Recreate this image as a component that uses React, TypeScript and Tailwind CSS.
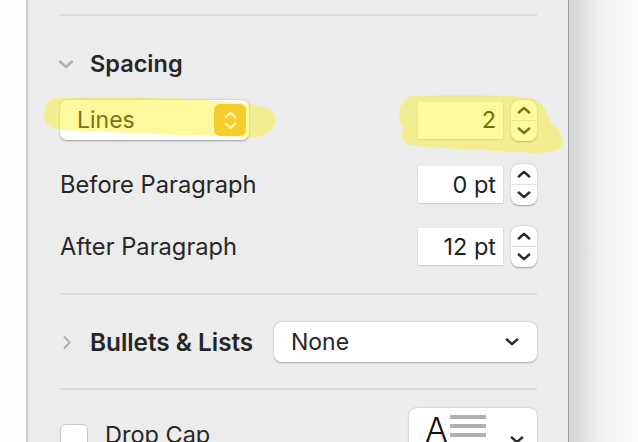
import React from "react"

const font = { fontFamily: "Inter, 'Noto Sans', sans-serif" }

function ChevronUp({ className = "" }: { className?: string }) {
  return (
    <svg viewBox="0 0 14 8" className={className} fill="none" stroke="currentColor" strokeWidth="2.4" strokeLinecap="round" strokeLinejoin="round">
      <path d="M1.8 6.5 L7 1.8 L12.2 6.5" />
    </svg>
  )
}

function ChevronDown({ className = "" }: { className?: string }) {
  return (
    <svg viewBox="0 0 14 8" className={className} fill="none" stroke="currentColor" strokeWidth="2.4" strokeLinecap="round" strokeLinejoin="round">
      <path d="M1.8 1.5 L7 6.2 L12.2 1.5" />
    </svg>
  )
}

function Stepper() {
  return (
    <div className="w-[26px] h-[41px] rounded-[8px] bg-white shadow-[0_0.5px_1.5px_rgba(0,0,0,0.35)] flex flex-col text-[#2a2a2a]">
      <div className="flex-1 flex items-center justify-center border-b border-[#e2e2e2]">
        <ChevronUp className="w-[14px] h-[8px]" />
      </div>
      <div className="flex-1 flex items-center justify-center">
        <ChevronDown className="w-[14px] h-[8px]" />
      </div>
    </div>
  )
}

function NumberField({ value }: { value: string }) {
  return (
    <div className="flex items-center gap-[8px]">
      <div className="w-[85px] h-[37px] bg-white shadow-[0_0.5px_1.5px_rgba(0,0,0,0.3)] flex items-center justify-end pr-[7px] text-[23.5px] text-[#1f1f1f]">
        {value}
      </div>
      <Stepper />
    </div>
  )
}

function Divider() {
  return <div className="h-[2px] bg-[#dadada]" />
}

export default function App() {
  return (
    <div className="relative w-[638px] h-[442px] flex overflow-hidden bg-white" style={font}>
      <div className="w-[26px] bg-[#fdfdfd]" />

      {/* inspector panel */}
      <div className="w-[543px] bg-[#ececec] border-l-2 border-[#cdcdcd] border-r border-r-[#9d9d9d] pl-[32px] pr-[31px] text-[#262626]">
        <div className="pt-[14px]">
          <Divider />
        </div>

        <div className="mt-[28px] h-[40px] flex items-center">
          <ChevronDown className="w-[16px] h-[9px] text-[#b0b0b0] ml-[-2px]" />
          <span className="ml-[16px] text-[23.5px] font-semibold">Spacing</span>
        </div>

        <div className="mt-[16px] h-[40px] flex items-center justify-between">
          <div className="w-[189px] h-[40px] rounded-[7px] bg-white shadow-[0_0.5px_2px_rgba(0,0,0,0.35)] flex items-center justify-between pl-[17px] pr-[3px]">
            <span className="text-[23px]">Lines</span>
            <div className="w-[32px] h-[32px] rounded-[6px] bg-[#f0b94f] flex flex-col items-center justify-center gap-[3px] text-white">
              <ChevronUp className="w-[13px] h-[8px]" />
              <ChevronDown className="w-[13px] h-[8px]" />
            </div>
          </div>
          <NumberField value="2" />
        </div>

        <div className="mt-[24px] h-[41px] flex items-center justify-between">
          <span className="text-[23.7px]">Before Paragraph</span>
          <NumberField value="0 pt" />
        </div>

        <div className="mt-[21px] h-[41px] flex items-center justify-between">
          <span className="text-[23.7px]">After Paragraph</span>
          <NumberField value="12 pt" />
        </div>

        <div className="mt-[26px]">
          <Divider />
        </div>

        <div className="mt-[27px] h-[40px] flex items-center">
          <svg viewBox="0 0 8 14" className="w-[8px] h-[15px] ml-[3px] text-[#b0b0b0]" fill="none" stroke="currentColor" strokeWidth="2" strokeLinecap="round" strokeLinejoin="round">
            <path d="M1.5 1.5 L6.5 7 L1.5 12.5" />
          </svg>
          <span className="ml-[19px] text-[24.3px] font-semibold">Bullets &amp; Lists</span>
          <div className="ml-auto w-[263px] h-[40px] rounded-[8px] bg-white shadow-[0_0.5px_2px_rgba(0,0,0,0.3)] flex items-center justify-between pl-[17px] pr-[18px]">
            <span className="text-[23px]">None</span>
            <ChevronDown className="w-[14px] h-[8px] text-[#2a2a2a]" />
          </div>
        </div>

        <div className="mt-[26px]">
          <Divider />
        </div>

        <div className="mt-[18px] flex items-start">
          <div className="mt-[16px] w-[28px] h-[28px] rounded-[6px] bg-white border border-[#c9c9c9]" />
          <span className="ml-[17px] mt-[12px] text-[23.5px] leading-[30px]">Drop Cap</span>
          <div className="ml-auto w-[128px] h-[50px] rounded-[8px] bg-white shadow-[0_0.5px_2px_rgba(0,0,0,0.3)] relative">
            <span className="absolute left-[16px] top-[0px] text-[34px] leading-[44px] font-light text-[#111]">A</span>
            <div className="absolute left-[41px] top-[7px] w-[36px] flex flex-col gap-[5px]">
              <div className="h-[4px] bg-[#b0b0b0]" />
              <div className="h-[4px] bg-[#b0b0b0]" />
              <div className="h-[4px] bg-[#b0b0b0]" />
            </div>
            <ChevronDown className="absolute left-[101px] top-[28px] w-[14px] h-[8px] text-[#2a2a2a]" />
          </div>
        </div>
      </div>

      <div className="flex-1 bg-gradient-to-r from-[#d4d4d4] via-[#f3f3f3] to-[#fbfbfb]" />

      {/* highlighter marks */}
      <svg className="absolute inset-0 pointer-events-none" width="638" height="442" viewBox="0 0 638 442">
        <path
          fill="rgba(255,238,0,0.38)"
          d="M56 98 C110 95 190 97 248 104 C268 106 277 112 275 121 C273 132 262 138 248 137 C190 135 120 133 64 130 C50 129 43 121 44 113 C45 104 50 98 56 98 Z"
        />
        <path
          fill="rgba(255,238,0,0.38)"
          d="M415 96 C460 94 510 95 530 98 C545 102 548 115 550 122 C558 128 565 136 562 145 C558 153 540 154 520 152 C480 150 440 148 415 146 C402 145 399 136 404 128 C398 122 398 110 402 104 C405 99 409 96 415 96 Z"
        />
      </svg>
    </div>
  )
}
